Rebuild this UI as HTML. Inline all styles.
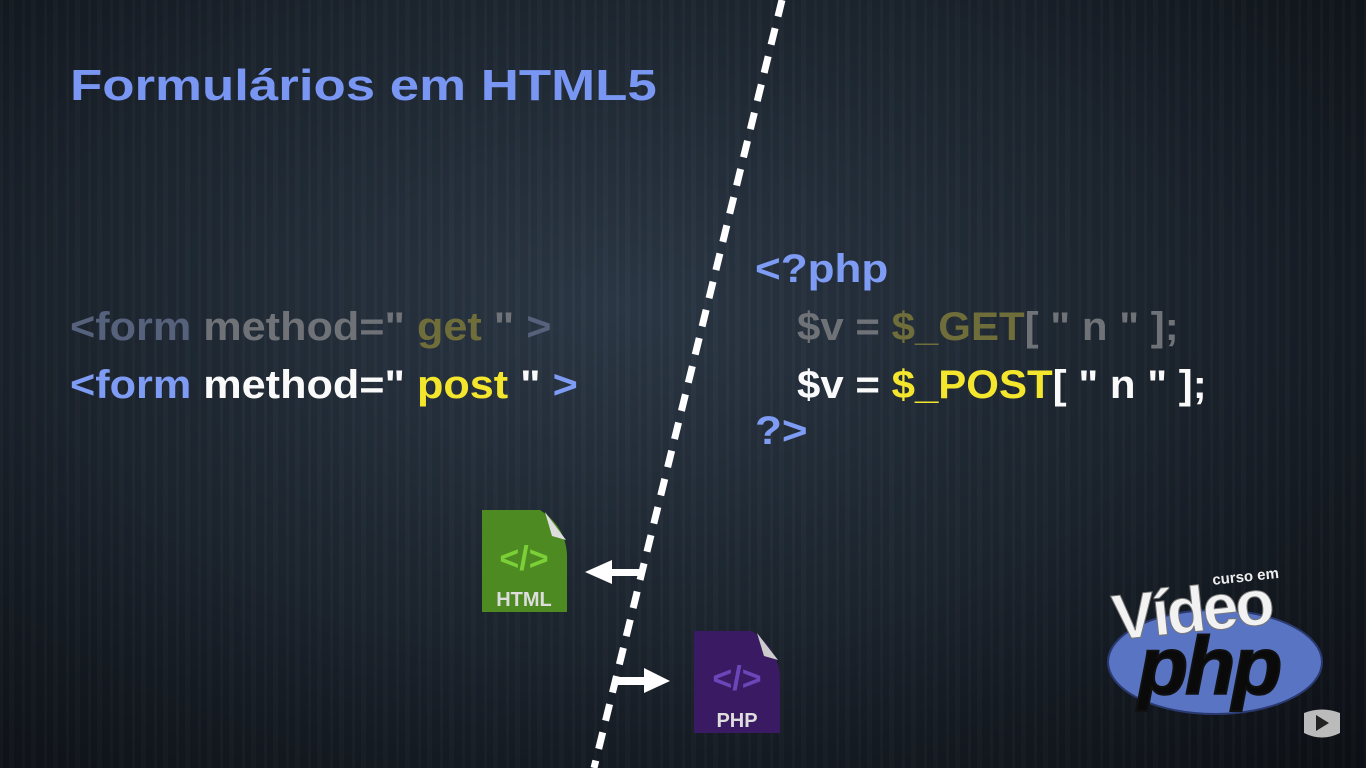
<!DOCTYPE html>
<html><head><meta charset="utf-8"><style>
html,body{margin:0;padding:0}
body{width:1366px;height:768px;overflow:hidden;position:relative;font-family:"Liberation Sans",sans-serif;font-weight:bold;
background:radial-gradient(ellipse at 45% 40%,#2c3846 0%,#1e2731 45%,#12171e 80%,#0c1015 100%);}
.stripes{position:absolute;inset:0;background:repeating-linear-gradient(90deg,rgba(255,255,255,0.02) 0 3px,rgba(0,0,0,0.04) 3px 9px,rgba(255,255,255,0.015) 9px 14px,rgba(0,0,0,0.03) 14px 22px);}
.t{position:absolute;white-space:pre;font-size:40px;line-height:1;transform-origin:0 50%}
.b{color:#7e9cf4}.w{color:#fafafa}.y{color:#f4e62c}
.gb{color:#56617c}.g{color:#6f7378}.gy{color:#6f6e3a}
</style></head><body>
<div class="stripes"></div>
<div class="t" style="left:70px;top:64px;font-size:44px;color:#7896f2;transform:scaleX(1.2)">Formulários em HTML5</div>
<div class="t" style="left:70px;top:307px;transform:scaleX(1.08)"><span class="gb">&lt;form</span> <span class="g">method=</span><span class="g">" </span><span class="gy">get</span><span class="g"> "</span><span class="gb"> &gt;</span></div>
<div class="t" style="left:70px;top:365px;transform:scaleX(1.08)"><span class="b">&lt;form</span> <span class="w">method=</span><span class="w">" </span><span class="y">post</span><span class="w"> "</span><span class="b"> &gt;</span></div>
<div class="t b" style="left:755px;top:249px;transform:scaleX(1.1)">&lt;?php</div>
<div class="t" style="left:797px;top:307px;transform:scaleX(1.05)"><span class="g">$v = </span><span class="gy">$_GET</span><span class="g">[ " n " ];</span></div>
<div class="t" style="left:797px;top:365px;transform:scaleX(1.05)"><span class="w">$v = </span><span class="y">$_POST</span><span class="w">[ " n " ];</span></div>
<div class="t b" style="left:755px;top:411px;transform:scaleX(1.1)">?&gt;</div>
<svg width="1366" height="768" style="position:absolute;left:0;top:0">
<line x1="782" y1="0" x2="594" y2="768" stroke="#fff" stroke-width="7" stroke-dasharray="17 12"/>
<path d="M482 510 L540 510 Q568 528 567 560 L567 612 L482 612 Z" fill="#4e8a22"/>
<path d="M545 512 L566 540 L552 536 Z" fill="#ddd"/>
<text x="524" y="570" font-size="34" fill="#7bd038" text-anchor="middle" font-family="Liberation Sans" font-weight="bold">&lt;/&gt;</text>
<text x="524" y="606" font-size="20" fill="#ddd" text-anchor="middle" font-weight="bold" font-family="Liberation Sans">HTML</text>
<path d="M694 631 L752 631 Q780 650 780 680 L780 733 L694 733 Z" fill="#3a1a62"/>
<path d="M757 633 L778 660 L764 656 Z" fill="#ccc"/>
<text x="737" y="690" font-size="34" fill="#6a46b8" text-anchor="middle" font-family="Liberation Sans" font-weight="bold">&lt;/&gt;</text>
<text x="737" y="727" font-size="20" fill="#ddd" text-anchor="middle" font-weight="bold" font-family="Liberation Sans">PHP</text>
<path d="M640 569 L612 569 L612 560 L585 572 L612 584 L612 576 L640 576 Z" fill="#fff"/>
<path d="M614 677 L644 677 L644 668 L670 681 L644 693 L644 685 L614 685 Z" fill="#fff"/>
<ellipse cx="1215" cy="662" rx="107" ry="52" fill="#5a74c4" stroke="#2a3a70" stroke-width="2"/>
<text x="1138" y="694" font-size="82" font-style="italic" font-weight="bold" fill="#0a0a0a" font-family="Liberation Sans" stroke="#111" stroke-width="2" letter-spacing="-3">php</text>
<text x="1112" y="632" font-size="64" font-weight="bold" fill="#f2f2f2" font-family="Liberation Sans" transform="rotate(-6 1190 610)" stroke="#777" stroke-width="1" letter-spacing="-3">Vídeo</text>
<text x="1212" y="582" font-size="15" fill="#eee" font-family="Liberation Sans" transform="rotate(-6 1240 575)">curso em</text>
<path d="M1304 713 Q1322 706 1340 713 L1340 733 Q1322 742 1304 733 Z" fill="#bbb"/>
<path d="M1316 715 L1329 723 L1316 731 Z" fill="#222"/>
</svg>
</body></html>
